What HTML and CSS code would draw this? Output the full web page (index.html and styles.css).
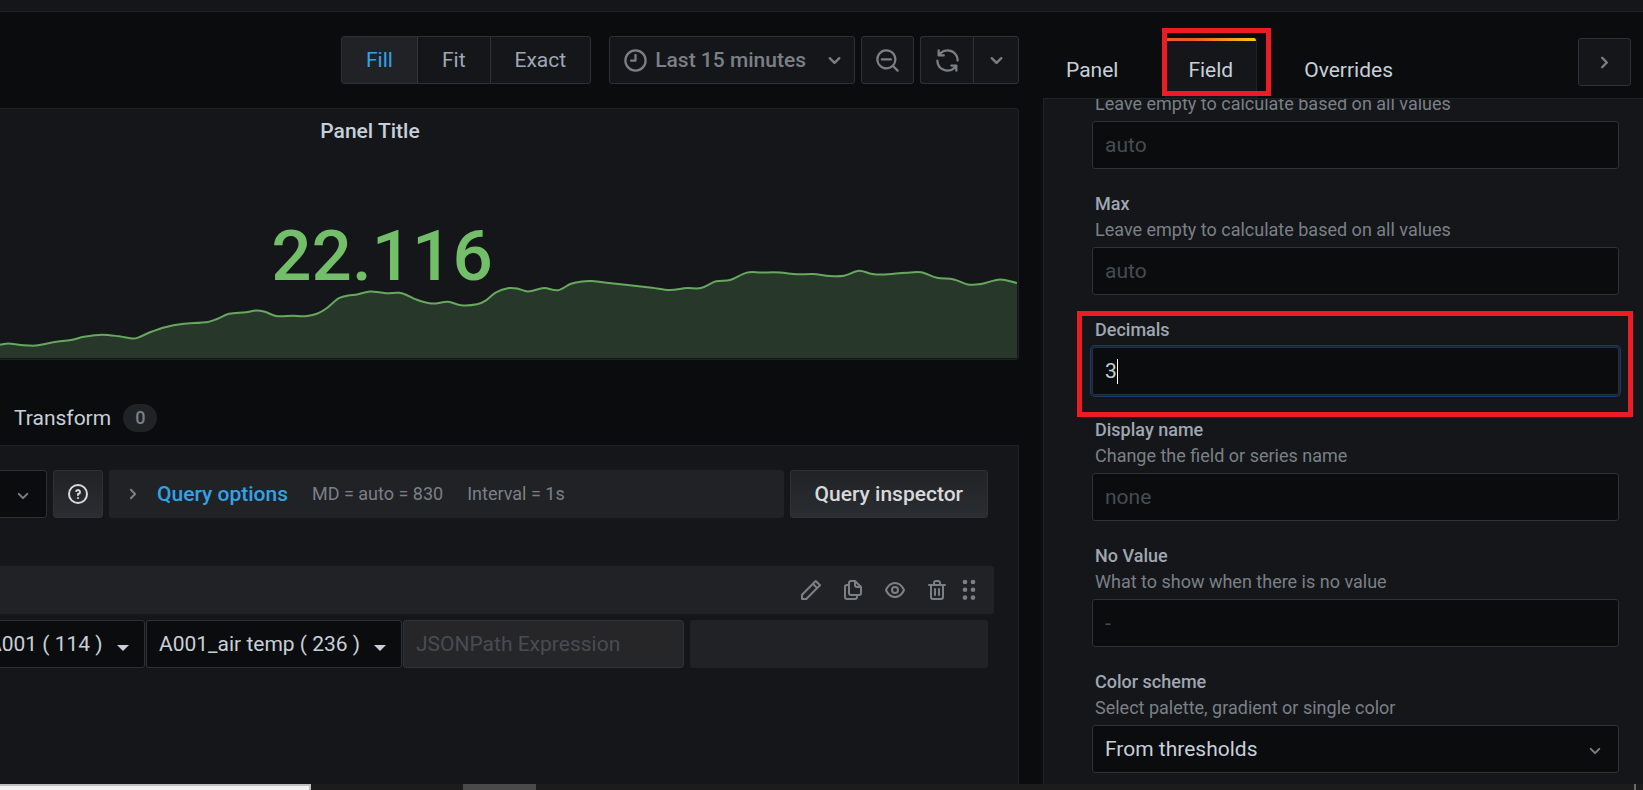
FILE: index.html
```html
<!DOCTYPE html>
<html lang="en">
<head>
<meta charset="utf-8">
<title>Edit panel</title>
<link rel="stylesheet" href="styles.css">
</head>
<body>
<svg class="sprite" aria-hidden="true">
  <symbol id="i-down" viewBox="0 0 24 24"><path d="M17,9.17a1,1,0,0,0-1.41,0L12,12.71,8.46,9.17a1,1,0,0,0-1.41,0,1,1,0,0,0,0,1.42l4.24,4.24a1,1,0,0,0,1.42,0L17,10.59A1,1,0,0,0,17,9.17Z"/></symbol>
  <symbol id="i-right" viewBox="0 0 24 24"><path d="M14.83,11.29,10.59,7.05a1,1,0,0,0-1.42,0,1,1,0,0,0,0,1.41L12.71,12,9.17,15.54a1,1,0,0,0,0,1.41,1,1,0,0,0,.71.29,1,1,0,0,0,.71-.29l4.24-4.24A1,1,0,0,0,14.83,11.29Z"/></symbol>
  <symbol id="i-clock" viewBox="0 0 24 24"><path d="M12,6a1,1,0,0,0-1,1v4H8a1,1,0,0,0,0,2h4a1,1,0,0,0,1-1V7A1,1,0,0,0,12,6Zm0-4A10,10,0,1,0,22,12,10,10,0,0,0,12,2Zm0,18a8,8,0,1,1,8-8A8,8,0,0,1,12,20Z"/></symbol>
  <symbol id="i-zoom-out" viewBox="0 0 24 24"><path d="M21.71,20.29,18,16.61A9,9,0,1,0,16.61,18l3.68,3.68a1,1,0,0,0,1.42,0A1,1,0,0,0,21.71,20.29ZM11,18a7,7,0,1,1,7-7A7,7,0,0,1,11,18Zm4-8H7a1,1,0,0,0,0,2h8a1,1,0,0,0,0-2Z"/></symbol>
  <symbol id="i-sync" viewBox="0 0 24 24"><path d="M19.91,15.51H15.38a1,1,0,0,0,0,2h2.4A8,8,0,0,1,4,12a1,1,0,1,0-2,0,10,10,0,0,0,16.88,7.23V21a1,1,0,0,0,2,0V16.5A1,1,0,0,0,19.91,15.51ZM12,2A10,10,0,0,0,5.12,4.77V3a1,1,0,0,0-2,0V7.5a1,1,0,0,0,1,1h4.5a1,1,0,0,0,0-2H6.22A8,8,0,0,1,20,12a1,1,0,0,0,2,0A10,10,0,0,0,12,2Z"/></symbol>
  <symbol id="i-help" viewBox="0 0 24 24"><path d="M11.29,15.29a1.58,1.58,0,0,0-.12.15.76.76,0,0,0-.09.18.64.64,0,0,0-.06.18,1.36,1.36,0,0,0,0,.2.84.84,0,0,0,.08.38.9.9,0,0,0,.54.54.94.94,0,0,0,.76,0,.9.9,0,0,0,.54-.54A1,1,0,0,0,13,16a1,1,0,0,0-.29-.71A1,1,0,0,0,11.29,15.29ZM12,2A10,10,0,1,0,22,12,10,10,0,0,0,12,2Zm0,18a8,8,0,1,1,8-8A8,8,0,0,1,12,20ZM12,7A3,3,0,0,0,9.4,8.5a1,1,0,1,0,1.73,1A1,1,0,0,1,12,9a1,1,0,0,1,0,2,1,1,0,0,0-1,1v1a1,1,0,0,0,2,0v-.18A3,3,0,0,0,12,7Z"/></symbol>
  <symbol id="i-pen" viewBox="0 0 24 24"><path d="M22,7.24a1,1,0,0,0-.29-.71L17.47,2.29A1,1,0,0,0,16.76,2a1,1,0,0,0-.71.29L13.22,5.12h0L2.29,16.05a1,1,0,0,0-.29.71V21a1,1,0,0,0,1,1H7.24A1,1,0,0,0,8,21.71L18.87,10.78h0L21.71,8a1.19,1.19,0,0,0,.22-.33,1,1,0,0,0,0-.24.7.7,0,0,0,0-.14ZM6.83,20H4V17.17l9.93-9.93,2.83,2.83ZM18.17,8.66,15.34,5.83l1.42-1.41,2.82,2.82Z"/></symbol>
  <symbol id="i-copy" viewBox="0 0 24 24"><path d="M21,8.94a1.31,1.31,0,0,0-.06-.27l0-.09a1.07,1.07,0,0,0-.19-.28h0l-6-6h0a1.07,1.07,0,0,0-.28-.19.32.32,0,0,0-.09,0A.88.88,0,0,0,14.05,2H10A3,3,0,0,0,7,5V6H6A3,3,0,0,0,3,9V19a3,3,0,0,0,3,3h8a3,3,0,0,0,3-3V18h1a3,3,0,0,0,3-3V9S21,9,21,8.94ZM15,5.41,17.59,8H16a1,1,0,0,1-1-1ZM15,19a1,1,0,0,1-1,1H6a1,1,0,0,1-1-1V9A1,1,0,0,1,6,8H7v7a3,3,0,0,0,3,3h5Zm4-4a1,1,0,0,1-1,1H10a1,1,0,0,1-1-1V5a1,1,0,0,1,1-1h3V7a3,3,0,0,0,3,3h3Z"/></symbol>
  <symbol id="i-eye" viewBox="0 0 24 24"><path d="M21.92,11.6C19.9,6.91,16.1,4,12,4S4.1,6.91,2.08,11.6a1,1,0,0,0,0,.8C4.1,17.09,7.9,20,12,20s7.9-2.91,9.92-7.6A1,1,0,0,0,21.92,11.6ZM12,18c-3.17,0-6.17-2.29-7.9-6C5.83,8.29,8.83,6,12,6s6.17,2.29,7.9,6C18.17,15.71,15.17,18,12,18ZM12,8a4,4,0,1,0,4,4A4,4,0,0,0,12,8Zm0,6a2,2,0,1,1,2-2A2,2,0,0,1,12,14Z"/></symbol>
  <symbol id="i-trash" viewBox="0 0 24 24"><path d="M10,18a1,1,0,0,0,1-1V11a1,1,0,0,0-2,0v6A1,1,0,0,0,10,18ZM20,6H16V5a3,3,0,0,0-3-3H11A3,3,0,0,0,8,5V6H4A1,1,0,0,0,4,8H5V19a3,3,0,0,0,3,3h8a3,3,0,0,0,3-3V8h1a1,1,0,0,0,0-2ZM10,5a1,1,0,0,1,1-1h2a1,1,0,0,1,1,1V6H10Zm7,14a1,1,0,0,1-1,1H8a1,1,0,0,1-1-1V8H17Zm-3-1a1,1,0,0,0,1-1V11a1,1,0,0,0-2,0v6A1,1,0,0,0,14,18Z"/></symbol>
  <symbol id="i-dots" viewBox="0 0 24 24"><circle cx="8" cy="4" r="2.3"/><circle cx="16" cy="4" r="2.3"/><circle cx="8" cy="11.8" r="2.3"/><circle cx="16" cy="11.8" r="2.3"/><circle cx="8" cy="19.6" r="2.3"/><circle cx="16" cy="19.6" r="2.3"/></symbol>
  <symbol id="i-caret" viewBox="0 0 12 6"><path d="M0,0H12L6,6Z"/></symbol>
</svg>

<div class="topbar"></div>

<main class="editor">
  <section class="main-pane">
    <div class="toolbar">
      <div class="radio-group">
        <button class="radio active" type="button">Fill</button>
        <button class="radio" type="button">Fit</button>
        <button class="radio" type="button">Exact</button>
      </div>
      <div class="time-controls">
        <button class="tool time-picker" type="button"><svg class="icon lg"><use href="#i-clock"/></svg><span class="time-label">Last 15 minutes</span><svg class="icon lg"><use href="#i-down"/></svg></button>
        <button class="tool square" type="button" aria-label="Zoom out"><svg class="icon lg"><use href="#i-zoom-out"/></svg></button>
        <div class="tool-group">
          <button class="tool square joined" type="button" aria-label="Refresh"><svg class="icon lg"><use href="#i-sync"/></svg></button>
          <button class="tool interval" type="button" aria-label="Refresh interval"><svg class="icon lg"><use href="#i-down"/></svg></button>
        </div>
      </div>
    </div>

    <article class="viz">
      <svg class="chart" viewBox="-254 109 1271 249" preserveAspectRatio="none" aria-hidden="true">
        <path class="chart-area" id="area"/>
        <path class="chart-line" id="line"/>
      </svg>
      <h2 class="viz-title">Panel Title</h2>
      <div class="viz-value">22.116</div>
    </article>

    <div class="query-tabs">
      <a class="query-tab" href="#transform">Transform <span class="counter">0</span></a>
    </div>

    <div class="query-pane">
      <div class="source-row">
        <span class="select-wrap source"><select class="control" aria-label="Data source"><option></option></select><svg class="icon md chevron"><use href="#i-down"/></svg></span>
        <button class="btn help" type="button" aria-label="Data source help"><svg class="icon md"><use href="#i-help"/></svg></button>
        <div class="query-options">
          <svg class="icon md"><use href="#i-right"/></svg>
          <button class="link-btn" type="button">Query options</button>
          <span>MD = auto = 830</span>
          <span>Interval = 1s</span>
        </div>
        <button class="btn inspector" type="button">Query inspector</button>
      </div>

      <div class="query-header">
        <button class="icon-btn" type="button" aria-label="Rename query"><svg class="icon md"><use href="#i-pen"/></svg></button>
        <button class="icon-btn" type="button" aria-label="Duplicate query"><svg class="icon md"><use href="#i-copy"/></svg></button>
        <button class="icon-btn" type="button" aria-label="Disable query"><svg class="icon md"><use href="#i-eye"/></svg></button>
        <button class="icon-btn" type="button" aria-label="Remove query"><svg class="icon md"><use href="#i-trash"/></svg></button>
        <svg class="icon md handle"><use href="#i-dots"/></svg>
      </div>

      <div class="query-row">
        <span class="select-wrap device"><select class="control" aria-label="Device"><option>A001 ( 114 )</option></select><svg class="caret"><use href="#i-caret"/></svg></span>
        <span class="select-wrap sensor"><select class="control" aria-label="Sensor"><option>A001_air temp ( 236 )</option></select><svg class="caret"><use href="#i-caret"/></svg></span>
        <input class="control json" type="text" placeholder="JSONPath Expression" aria-label="JSONPath Expression" disabled>
        <div class="filler"></div>
      </div>
    </div>
  </section>

  <aside class="options-pane">
    <nav class="tabs">
      <a class="tab" href="#panel">Panel</a>
      <a class="tab active" href="#field">Field<span class="mark mark-tab"></span></a>
      <a class="tab" href="#overrides">Overrides</a>
      <button class="tool square collapse" type="button" aria-label="Hide options"><svg class="icon lg"><use href="#i-right"/></svg></button>
    </nav>
    <div class="options-body">
      <form class="fields">
        <div class="field">
          <label class="desc" for="min">Leave empty to calculate based on all values</label>
          <input class="control" id="min" type="text" placeholder="auto">
        </div>
        <div class="field">
          <label class="label" for="max">Max</label>
          <p class="desc">Leave empty to calculate based on all values</p>
          <input class="control" id="max" type="text" placeholder="auto">
        </div>
        <div class="field">
          <label class="label" for="decimals">Decimals</label>
          <input class="control focused" id="decimals" type="text" value="3">
          <span class="text-cursor"></span>
          <span class="mark mark-field"></span>
        </div>
        <div class="field">
          <label class="label" for="display">Display name</label>
          <p class="desc">Change the field or series name</p>
          <input class="control" id="display" type="text" placeholder="none">
        </div>
        <div class="field">
          <label class="label" for="novalue">No Value</label>
          <p class="desc">What to show when there is no value</p>
          <input class="control" id="novalue" type="text" placeholder="-">
        </div>
        <div class="field">
          <label class="label" for="scheme">Color scheme</label>
          <p class="desc">Select palette, gradient or single color</p>
          <span class="select-wrap"><select class="control" id="scheme"><option>From thresholds</option></select><svg class="icon md chevron"><use href="#i-down"/></svg></span>
        </div>
      </form>
    </div>
  </aside>
</main>

<footer class="taskbar">
  <div class="task-search"></div>
  <div class="task-active"></div>
  <div class="task-end"></div>
</footer>
<script src="chart.js"></script>
</body>
</html>
```
FILE: chart.js
```js
// Samples of the sparkline, left to right.
const points = [
  [-254, 346], [-120, 345], [0, 344.6], [8, 343.4], [21, 345], [36, 345.6], [55, 342], [71, 340], [84, 336.8], [102, 334.7],
  [119, 336.3], [132, 338.5], [138, 337.6], [150, 332.3], [165, 327.2], [182, 324], [208, 322], [217, 319],
  [229, 313.8], [246, 312.3], [256, 310.5], [265, 311.8], [276, 316], [293, 315.8], [305, 316.2], [317, 313.7],
  [327, 308], [338, 298.7], [345, 296.2], [358, 294.2], [370, 291.5], [386, 293.2], [399, 292.8], [406, 294.7],
  [417, 299.8], [432, 303.6], [448, 301.8], [461, 305.2], [477, 304.2], [486, 300.3], [496, 292.3], [509, 288.1],
  [517, 288.5], [528, 291.4], [544, 288.1], [558, 290.2], [571, 283.8], [582, 281.4], [592, 281], [609, 283],
  [652, 287.7], [670, 290], [687, 288.1], [701, 288], [716, 281.3], [730, 280], [747, 272.6], [761, 272.5],
  [780, 272.5], [797, 274.3], [813, 274], [830, 276], [844, 275.7], [859, 270.8], [871, 273.7], [882, 274.6],
  [906, 272.8], [921, 272.3], [937, 277.7], [954, 279.4], [968, 284.5], [981, 284], [1000, 279.5], [1017, 283]
];

// Catmull-Rom through the samples, written as cubic segments.
let d = `M${points[0]}`;
for (let i = 0; i < points.length - 1; i++) {
  const p0 = points[i - 1] || points[i];
  const p1 = points[i];
  const p2 = points[i + 1];
  const p3 = points[i + 2] || p2;
  const w = (p2[0] - p1[0]) / 3;
  const m1 = (p2[1] - p0[1]) / (p2[0] - p0[0]);
  const m2 = (p3[1] - p1[1]) / (p3[0] - p1[0]);
  d += `C${p1[0] + w},${p1[1] + m1 * w} ${p2[0] - w},${p2[1] - m2 * w} ${p2}`;
}
document.getElementById("line").setAttribute("d", d);
document.getElementById("area").setAttribute("d", `${d}V358H-254Z`);
```
FILE: styles.css
```css
:root {
  --page: #0b0c0e;
  --pane: #141619;
  --raised: #202226;
  --line: #202226;
  --line-strong: #2c3235;
  --text: #c7d0d9;
  --text-mid: #9fa7b3;
  --text-weak: #7b8087;
  --blue: #33a2e5;
  --green: #73bf69;
  --mark: #ed1c24;
}

* { box-sizing: border-box; }

body {
  margin: 0;
  height: 100vh;
  display: flex;
  flex-direction: column;
  overflow: hidden;
  background: var(--page);
  color: var(--text);
  font: 400 21px/32px Roboto, "Liberation Sans", sans-serif;
}

button, input, select { font: inherit; color: inherit; margin: 0; }
button { cursor: pointer; }
a { color: inherit; text-decoration: none; }
p, h2 { margin: 0; }

.sprite { position: absolute; width: 0; height: 0; }
.icon { display: block; flex: none; fill: currentColor; }
.icon.lg { width: 27px; height: 27px; }
.icon.md { width: 24px; height: 24px; }

.topbar {
  flex: none;
  height: 12px;
  background: var(--pane);
  border-bottom: 1px solid var(--line);
}

.editor {
  flex: 1;
  min-height: 0;
  display: grid;
  grid-template-columns: minmax(0, 1fr) 600px;
  grid-template-rows: minmax(0, 1fr);
  column-gap: 24px;
}

.main-pane {
  min-width: 0;
  display: flex;
  flex-direction: column;
  overflow: hidden;
}

/* Toolbar */
.toolbar {
  display: flex;
  justify-content: flex-end;
  gap: 18px;
  padding: 24px 0;
}
.radio-group {
  display: flex;
  border: 1px solid var(--line-strong);
  border-radius: 3px;
  background: var(--pane);
}
.radio {
  height: 46px;
  padding: 0 24px;
  border: 0;
  background: none;
  color: var(--text-mid);
}
.radio + .radio { border-left: 1px solid var(--line-strong); }
.radio.active { background: var(--raised); color: var(--blue); }

.time-controls { display: flex; gap: 6px; }
.tool-group { display: flex; }
.tool {
  height: 48px;
  padding: 0;
  display: flex;
  align-items: center;
  justify-content: center;
  border: 1px solid var(--line-strong);
  border-radius: 3px;
  background: var(--pane);
  color: var(--text-weak);
}
.time-picker { padding: 0 6px 0 12px; font-weight: 500; }
.time-label { margin: 0 15px 0 6px; }
.square { width: 53px; }
.joined { border-right: 0; border-radius: 3px 0 0 3px; }
.interval { width: 46px; border-radius: 0 3px 3px 0; }

/* Visualization */
.viz {
  flex: none;
  display: grid;
  grid-template-rows: 44px 206px;
  height: 252px;
  margin-left: -255px;
  border: 1px solid var(--line);
  border-radius: 3px;
  background: var(--pane);
}
.chart {
  grid-area: 1 / 1 / 3 / 2;
  width: calc(100% - 1px);
  height: 249px;
}
.chart-area { fill: var(--green); fill-opacity: 0.2; }
.chart-line { fill: none; stroke: var(--green); stroke-width: 2; stroke-opacity: 0.85; }
.viz-title {
  grid-area: 1 / 1;
  padding-right: 24px;
  font-size: 21px;
  font-weight: 500;
  line-height: 44px;
  text-align: center;
}
.viz-value {
  grid-area: 2 / 1;
  align-self: center;
  color: var(--green);
  font-size: 71px;
  font-weight: 500;
  line-height: 84px;
  text-align: center;
}

/* Query editor */
.query-tabs {
  flex: none;
  height: 85px;
  padding: 42px 14px 0;
}
.query-tab { display: inline-flex; align-items: center; gap: 12px; }
.counter {
  padding: 0 12px;
  border-radius: 14px;
  background: var(--raised);
  color: var(--text-weak);
  font-size: 18px;
  font-weight: 500;
  line-height: 28px;
}
.query-pane {
  flex: 1;
  min-height: 0;
  padding: 24px 24px 0 0;
  border: 1px solid var(--line);
  border-width: 1px 1px 0 0;
  background: var(--pane);
}
.source-row { display: flex; gap: 6px; padding-right: 6px; }

.control {
  display: block;
  width: 100%;
  height: 48px;
  padding: 0 12px;
  border: 1px solid var(--line-strong);
  border-radius: 3px;
  outline: 0;
  appearance: none;
  background: var(--page);
  color: var(--text);
}
.control::placeholder { color: #464c54; opacity: 1; }
.select-wrap { position: relative; display: block; flex: none; }
.chevron {
  position: absolute;
  top: 14px;
  right: 12px;
  color: var(--text-weak);
  pointer-events: none;
}
.caret {
  position: absolute;
  top: 25px;
  right: 16px;
  width: 12px;
  height: 6px;
  fill: var(--text);
  pointer-events: none;
}
.source { width: 251px; margin-left: -204px; }

.btn {
  height: 48px;
  border: 1px solid var(--line-strong);
  border-radius: 3px;
  background: linear-gradient(180deg, #202226, #2a2d31);
  color: #d8d9da;
  font-weight: 500;
}
.help {
  width: 50px;
  padding: 0;
  display: flex;
  align-items: center;
  justify-content: center;
}
.inspector { padding: 0 24px; }
.query-options {
  flex: 1;
  min-width: 0;
  display: flex;
  align-items: center;
  padding: 0 12px;
  border-radius: 3px;
  background: var(--raised);
  color: var(--text-weak);
  font-size: 18px;
  white-space: nowrap;
  gap: 24px;
}
.link-btn {
  margin-left: -12px;
  padding: 0;
  border: 0;
  background: none;
  color: var(--blue);
  font-size: 21px;
  font-weight: 500;
}

.query-header {
  display: flex;
  align-items: center;
  justify-content: flex-end;
  gap: 18px;
  height: 48px;
  margin-top: 48px;
  padding-right: 13px;
  border-radius: 0 3px 3px 0;
  background: var(--raised);
  color: var(--text-weak);
}
.icon-btn { padding: 0; border: 0; background: none; color: inherit; }
.handle { margin-left: -10px; }

.query-row { display: flex; gap: 1px; margin: 6px 6px 0 -25px; }
.device { width: 170px; }
.sensor { width: 256px; }
.json { width: 281px; flex: none; background: #262628; }
.filler { flex: 1; margin-left: 5px; border-radius: 3px; background: var(--raised); }

/* Options pane */
.options-pane { min-width: 0; display: flex; flex-direction: column; }
.tabs {
  flex: none;
  display: flex;
  gap: 24px;
  height: 86px;
  padding: 26px 12px 0 0;
}
.tab { position: relative; padding: 16px 23px 0; }
.tab.active {
  border-right: 1px solid var(--line);
  border-radius: 3px 3px 0 0;
  background: linear-gradient(90deg, #f05a28 30%, #fbca0a 99%) top / 100% 3px no-repeat, var(--pane);
}
.collapse { margin-left: auto; }
.options-body {
  flex: 1;
  min-height: 0;
  overflow: hidden;
  border: 1px solid var(--line);
  border-width: 1px 0 0 1px;
  background: var(--pane);
}
.fields {
  display: flex;
  flex-direction: column;
  gap: 24px;
  margin-top: -4px;
  padding: 0 24px 0 48px;
}
.field { position: relative; }
.label, .desc { display: block; padding-left: 3px; font-size: 18px; line-height: 22px; }
.label { margin-bottom: 6px; color: var(--text-mid); font-weight: 500; }
.desc { margin: -2px 0 6px; color: var(--text-weak); }
.focused { box-shadow: 0 0 0 1px #15233a, 0 0 0 2px #1b3c70; caret-color: transparent; }
.text-cursor {
  position: absolute;
  bottom: 11px;
  left: 25px;
  width: 1px;
  height: 25px;
  background: #fff;
}

/* Highlight frames */
.mark { position: absolute; z-index: 2; border: 5px solid var(--mark); pointer-events: none; }
.mark-tab { inset: -10px -15px 2px -3px; }
.mark-field { inset: -8px -14px -22px -15px; }

/* Strip along the bottom edge */
.taskbar { flex: none; display: flex; height: 6px; background: #1c1c1c; }
.task-search { width: 311px; border: solid #c0c0c0; border-width: 2px 2px 0 0; background: #f2f2f2; }
.task-active { width: 73px; margin-left: 152px; background: #4a4a4a; }
.task-end { width: 2px; margin: 0 7px 0 auto; background: #6a6a6a; }
```
